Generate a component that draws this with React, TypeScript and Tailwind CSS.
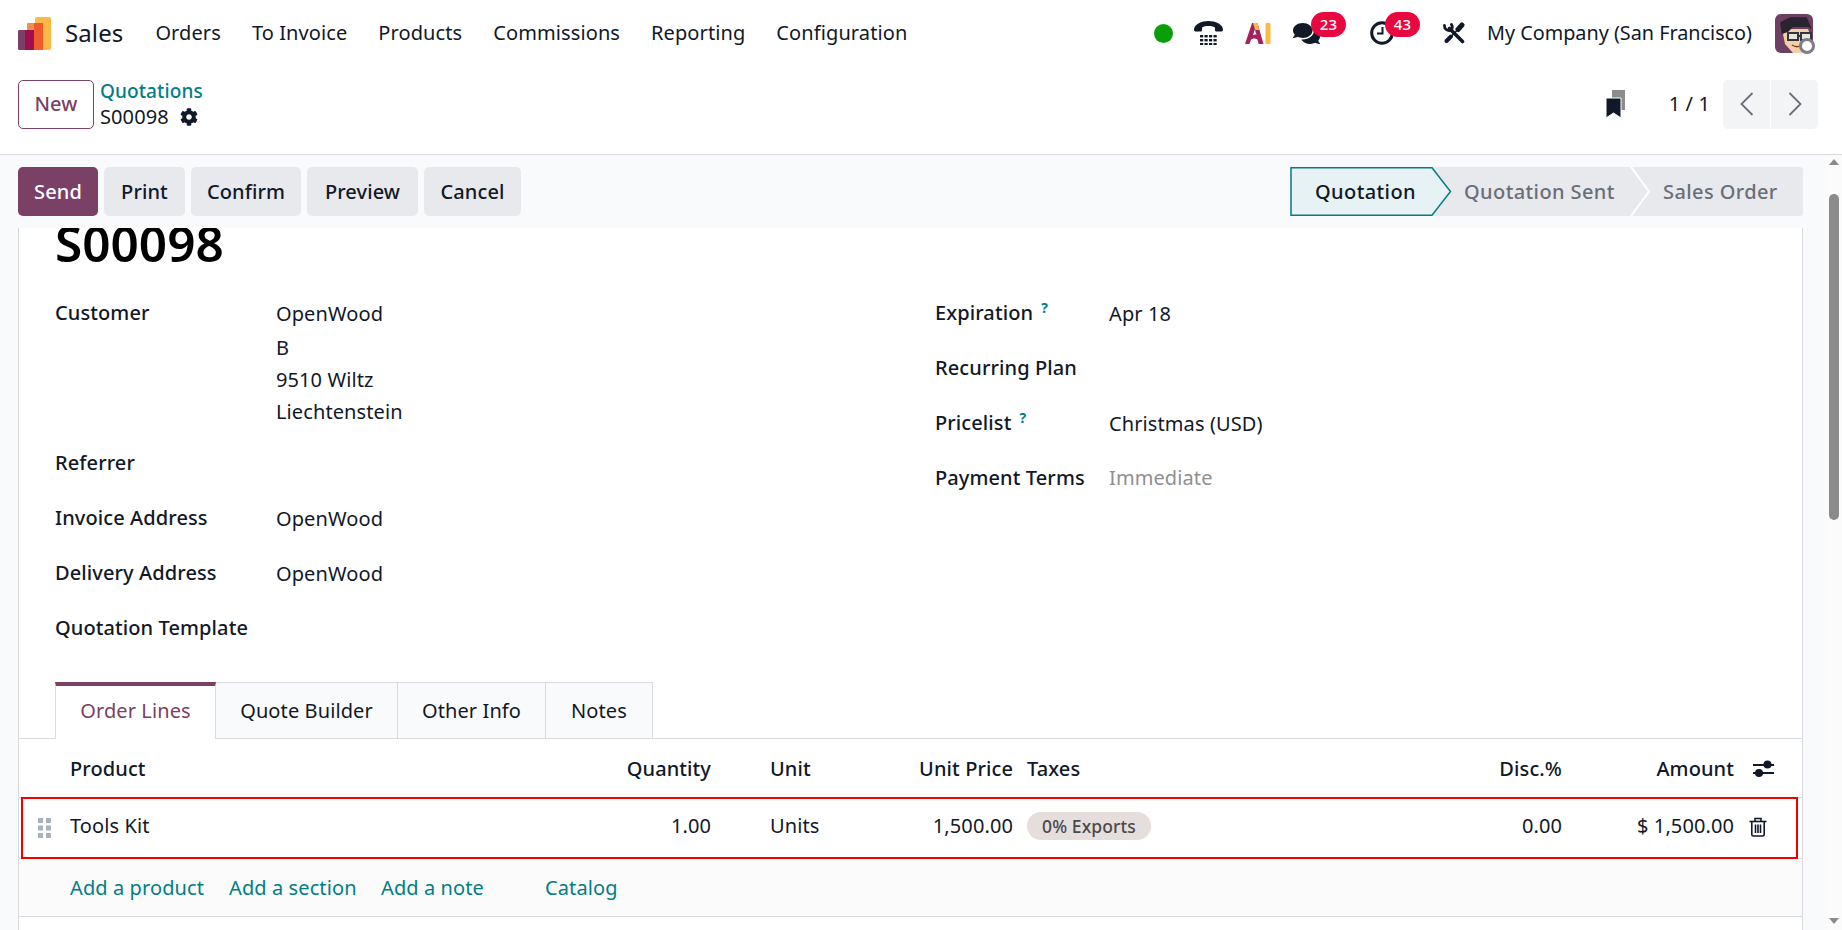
import { FaCog, FaComments } from "react-icons/fa";

const TABLE_COLS = "grid grid-cols-[51px_541px_100px_302px_449px_100px_172px_1fr] items-center";

const navItems = ["Orders", "To Invoice", "Products", "Commissions", "Reporting", "Configuration"];
const actions = [
    { label: "Print", width: "w-[81px]" },
    { label: "Confirm", width: "w-[110px]" },
    { label: "Preview", width: "w-[111px]" },
    { label: "Cancel", width: "w-[97px]" },
];
const tabs = [
    { label: "Quote Builder", width: "w-[182px]" },
    { label: "Other Info", width: "w-[148px]" },
    { label: "Notes", width: "w-[107px]" },
];

function AppLogo() {
    return (
        <svg width="34" height="34" viewBox="0 0 34 34" className="shrink-0">
            <path d="M18 3a2 2 0 0 1 2-2h12a2 2 0 0 1 2 2v29a2 2 0 0 1-2 2H18z" fill="#fbb945" />
            <path d="M10 9a2 2 0 0 1 2-2h14v27H10z" fill="#f05a2c" />
            <path d="M10 9a2 2 0 0 1 2-2h5v7h-7z" fill="#ee8f4d" />
            <path d="M1 16a2 2 0 0 1 2-2h14v20H3a2 2 0 0 1-2-2z" fill="#a20d4f" />
            <path d="M1 16a2 2 0 0 1 2-2h5v20H3a2 2 0 0 1-2-2z" fill="#7b4065" />
        </svg>
    );
}

function PhoneIcon() {
    const cols = [6, 10.5, 15, 19.5];
    const rows = [14, 18, 22];
    return (
        <svg width="29" height="24" viewBox="0 0 29 24" className="shrink-0" fill="#111827">
            <path d="M0 8.500C0.500 3 7.500 0 14.500 0s14 3 14.500 8.500c0.100 1.200-0.500 2-1.600 2h-4.700c-1 0-1.600-0.600-1.700-1.600l-0.200-2.700C19.200 5.300 17 5 14.500 5s-4.700 0.300-6.300 1.200L8 8.900c-0.100 1-0.700 1.600-1.700 1.600H1.600C0.500 10.500-0.100 9.700 0 8.500z" />
            {rows.map((y) => cols.map((x) => <rect key={`${x}-${y}`} x={x} y={y} width="3.200" height="2.400" />))}
        </svg>
    );
}

function AiIcon() {
    return (
        <svg width="26" height="21" viewBox="0 0 26 21" className="shrink-0">
            <path d="M7 0h5.500L18.500 21h-4.800l-1.300-4.500c-2.500-1.500-5-1-6.500 0.500L4.300 21H0z" fill="#a3215f" />
            <path d="M8 12c1.500-0.700 2.600-0.700 3.500-0.300L9.800 6.500z" fill="#ffffff" />
            <path d="M8 0h4.500l2 7h-4.300z" fill="#fbb945" />
            <rect x="20.500" y="0" width="5" height="21" rx="1" fill="#fbb945" />
        </svg>
    );
}

function ClockIcon() {
    return (
        <svg width="24" height="24" viewBox="0 0 24 24" className="shrink-0" fill="none" stroke="#111827">
            <circle cx="12" cy="12" r="10.300" strokeWidth="3" />
            <path d="M12.500 6v6.500H7" strokeWidth="2" />
        </svg>
    );
}

function ToolsIcon() {
    return (
        <svg width="23" height="22" viewBox="0 0 23 22" className="shrink-0" fill="none" stroke="#111827" strokeLinecap="round">
            <path d="M6.500 6.500 19.500 19.500" strokeWidth="3.600" />
            <path d="M1.500 3.500a4.800 4.800 0 0 0 6 5 4.800 4.800 0 0 0 1-6" strokeWidth="2.800" />
            <path d="M19 3 15 7.500" strokeWidth="5" />
            <path d="M14 8.500 9 13.500" strokeWidth="1.500" />
            <path d="M8 14.500 3.500 19" strokeWidth="4" />
        </svg>
    );
}

function Avatar() {
    return (
        <div className="relative h-[39px] w-[38px] shrink-0">
            <svg width="38" height="39" viewBox="0 0 38 39" className="rounded-[6px]">
                <rect width="38" height="39" fill="#6f3f63" />
                <path d="M8 20 13 15H33L37 25 32 39H18L10 30z" fill="#f3cfa6" />
                <path d="M6.700 20 5 8.300 15 3.300H31.700L36.700 15 33 13H18L13 18z" fill="#2a2330" />
                <rect x="13" y="19" width="10" height="7" fill="#e9e6df" stroke="#34343c" strokeWidth="2" />
                <rect x="26" y="19" width="10" height="7" fill="#e9e6df" stroke="#34343c" strokeWidth="2" />
                <path d="M23 22h3" stroke="#34343c" strokeWidth="2" />
                <path d="M17 31c3 2 7 2 10 0" stroke="#7a3b2a" strokeWidth="1.500" fill="none" />
            </svg>
            <span className="absolute bottom-[-1px] right-[-2px] h-[16px] w-[16px] rounded-full border-[3px] border-[#7c7f89] bg-white" />
        </div>
    );
}

function Badge({ count, place }: { count: number; place: string }) {
    return (
        <span
            className={`absolute flex h-[25px] w-[35px] items-center justify-center rounded-full bg-[#e8083f] text-[15px] font-medium text-white ${place}`}
        >
            {count}
        </span>
    );
}

function BookmarkIcon() {
    return (
        <svg width="20" height="28" viewBox="0 0 20 28">
            <path d="M6 0h13v20H6z" fill="#8c8c8c" />
            <path d="M0 8h15V28l-7.500-5L0 28z" fill="#111827" stroke="#ffffff" strokeWidth="1" />
        </svg>
    );
}

function Chevron({ left }: { left?: boolean }) {
    return (
        <svg width="14" height="24" viewBox="0 0 14 24" fill="none" stroke="#6b6e76" strokeWidth="1.800">
            <path d={left ? "M12.500 1 1.500 12l11 11" : "M1.500 1l11 11-11 11"} />
        </svg>
    );
}

function SlidersIcon() {
    return (
        <svg width="21" height="18" viewBox="0 0 21 18" fill="#111827">
            <rect x="0" y="4" width="21" height="2" />
            <rect x="0" y="12" width="21" height="2" />
            <circle cx="14.500" cy="4.500" r="4" />
            <circle cx="6" cy="13" r="4" />
        </svg>
    );
}

function TrashIcon() {
    return (
        <svg width="18" height="20" viewBox="0 0 18 20" fill="none" stroke="#111827" strokeWidth="1.600">
            <path d="M0.500 4.500h17" />
            <path d="M6 4.500V1.500h6v3" />
            <path d="M2.800 4.500v13a1.500 1.500 0 0 0 1.500 1.500h9.400a1.500 1.500 0 0 0 1.500-1.500v-13" />
            <path d="M6.500 7.500v8.500M9 7.500v8.500M11.500 7.500v8.500" />
        </svg>
    );
}

function DragHandle() {
    return (
        <svg width="13" height="20" viewBox="0 0 13 20" fill="#a9b3c0">
            <rect x="0" y="0" width="5" height="5" />
            <rect x="8" y="0" width="5" height="5" />
            <rect x="0" y="7.500" width="5" height="5" />
            <rect x="8" y="7.500" width="5" height="5" />
            <rect x="0" y="15" width="5" height="5" />
            <rect x="8" y="15" width="5" height="5" />
        </svg>
    );
}

function Field({ label, help, value, muted }: { label: string; help?: boolean; value?: string; muted?: boolean }) {
    return (
        <div className="grid h-[55px] grid-cols-[174px_1fr] items-center">
            <div className="font-[550]">
                {label}
                {help && <sup className="ml-[8px] text-[14px] font-bold text-[#017e84]">?</sup>}
            </div>
            <div className={muted ? "pt-[1px] text-[#8f8f8f]" : "pt-[2px]"}>{value}</div>
        </div>
    );
}

function LeftField({ label, value }: { label: string; value?: string }) {
    return (
        <div className="grid h-[55px] grid-cols-[221px_1fr] items-center">
            <div className="font-[550]">{label}</div>
            <div className="pt-[3px]">{value}</div>
        </div>
    );
}

export default function App() {
    return (
        <div className="flex h-[930px] w-[1842px] flex-col overflow-hidden bg-white font-['Noto_Sans',sans-serif] text-[20px] tracking-[0.1px] text-[#111827]">
            {/* top navbar */}
            <header className="flex h-[66px] shrink-0 items-center pl-[17px] pr-[29px]">
                <AppLogo />
                <span className="ml-[14px] mr-[32px] text-[24px]">Sales</span>
                <nav className="flex gap-[31px]">
                    {navItems.map((item) => (
                        <span key={item}>{item}</span>
                    ))}
                </nav>
                <div className="ml-auto flex items-center">
                    <span className="h-[19px] w-[19px] rounded-full bg-[#0a9e0a]" />
                    <span className="ml-[21px]">
                        <PhoneIcon />
                    </span>
                    <span className="ml-[22px]">
                        <AiIcon />
                    </span>
                    <span className="relative ml-[22px] text-[27px]">
                        <FaComments />
                        <Badge count={23} place="left-[18px] top-[-8px]" />
                    </span>
                    <span className="relative ml-[50px]">
                        <ClockIcon />
                        <Badge count={43} place="left-[15px] top-[-9px]" />
                    </span>
                    <span className="ml-[49px]">
                        <ToolsIcon />
                    </span>
                    <span className="ml-[21px] mr-[23px] whitespace-nowrap text-[19.8px] tracking-normal">My Company (San Francisco)</span>
                    <Avatar />
                </div>
            </header>

            {/* breadcrumb and pager */}
            <div className="flex h-[89px] shrink-0 items-center border-b border-[#d8dadd] pb-[12px] pl-[18px] pr-[24px]">
                <button className="flex h-[49px] w-[76px] items-center justify-center rounded-[5px] border border-[#7b4065] font-medium text-[#7b4065]">
                    New
                </button>
                <div className="ml-[6px] leading-[26px]">
                    <div className="text-[19px] font-medium text-[#017e84]">Quotations</div>
                    <div className="flex items-center gap-[11px]">
                        S00098
                        <FaCog className="text-[18px]" />
                    </div>
                </div>
                <div className="ml-auto flex items-center">
                    <BookmarkIcon />
                    <span className="ml-[43px] mr-[13px]">1 / 1</span>
                    <div className="flex h-[49px] w-[95px] rounded-[5px] bg-[#f3f4f6]">
                        <span className="flex flex-1 items-center justify-center border-r border-white">
                            <Chevron left />
                        </span>
                        <span className="flex flex-1 items-center justify-center">
                            <Chevron />
                        </span>
                    </div>
                </div>
            </div>

            <div className="flex min-h-0 flex-1">
                <main className="flex min-w-0 flex-1 flex-col bg-[#f9fafb]">
                    {/* action buttons and status bar */}
                    <div className="flex h-[73px] shrink-0 items-center justify-between pb-[1px] pl-[18px] pr-[23px] font-[550]">
                        <div className="flex gap-[6px]">
                            <button className="h-[49px] w-[80px] rounded-[5px] bg-[#7b4065] pt-[1px] text-white">Send</button>
                            {actions.map((a) => (
                                <button key={a.label} className={`h-[49px] rounded-[5px] bg-[#e7e9ed] pt-[1px] ${a.width}`}>
                                    {a.label}
                                </button>
                            ))}
                        </div>
                        <div className="flex h-[49px] items-center rounded-[3px] bg-[#e7e9ed] tracking-[0.4px] text-[#6b6e78]">
                            <div className="relative flex h-full w-[162px] items-center pl-[25px] text-[#111827]">
                                <svg width="162" height="49" viewBox="0 0 162 49" className="absolute left-0 top-0">
                                    <path d="M1 0.750H142L160.500 24.500 142 48.250H1z" fill="#e6f2f3" stroke="#017e84" strokeWidth="1.500" />
                                </svg>
                                <span className="relative pt-[1px]">Quotation</span>
                            </div>
                            <span className="ml-[12px] w-[150px] whitespace-nowrap pt-[1px]">Quotation Sent</span>
                            <svg width="20" height="49" viewBox="0 0 20 49" className="ml-[16px]" fill="none" stroke="#ffffff" strokeWidth="2">
                                <path d="M1 0l18 24.500L1 49" />
                            </svg>
                            <span className="ml-[13px] mr-[26px] w-[114px] whitespace-nowrap pt-[1px]">Sales Order</span>
                        </div>
                    </div>

                    {/* form sheet */}
                    <section className="ml-[18px] mr-[23px] min-h-0 flex-1 overflow-hidden border-x border-[#d8dadd] bg-white">
                        <h1 className="-mt-[15px] mb-[12px] ml-[36px] text-[49.500px] font-semibold leading-[60px] tracking-normal text-black">S00098</h1>

                        <div className="grid grid-cols-[880px_1fr] pl-[36px]">
                            <div>
                                <div className="grid h-[150px] grid-cols-[221px_1fr] pt-[12px]">
                                    <div className="font-[550] leading-[32px]">Customer</div>
                                    <div className="leading-[32px]">
                                        <div className="mb-[2px] pt-[1px]">OpenWood</div>
                                        <div>B</div>
                                        <div>9510 Wiltz</div>
                                        <div>Liechtenstein</div>
                                    </div>
                                </div>
                                <LeftField label="Referrer" />
                                <LeftField label="Invoice Address" value="OpenWood" />
                                <LeftField label="Delivery Address" value="OpenWood" />
                                <LeftField label="Quotation Template" />
                            </div>
                            <div>
                                <Field label="Expiration" help value="Apr 18" />
                                <Field label="Recurring Plan" />
                                <Field label="Pricelist" help value="Christmas (USD)" />
                                <Field label="Payment Terms" value="Immediate" muted />
                            </div>
                        </div>

                        {/* tabs */}
                        <div className="mt-[27px] flex h-[57px] border-b border-[#d8dadd] pl-[36px]">
                            <div className="-mb-px flex h-[57px] w-[161px] items-center justify-center border-x border-[#d8dadd] border-t-[4px] border-t-[#7b4065] bg-white pb-[3px] text-[#7b4065]">
                                Order Lines
                            </div>
                            {tabs.map((t) => (
                                <div key={t.label} className={`flex items-center justify-center border-r border-t border-[#d8dadd] bg-[#f9fafb] ${t.width}`}>
                                    {t.label}
                                </div>
                            ))}
                        </div>

                        {/* order lines */}
                        <div className={`${TABLE_COLS} h-[59px] border-b border-[#d8dadd] pt-[2px] font-[550]`}>
                            <span />
                            <span>Product</span>
                            <span className="text-right">Quantity</span>
                            <span className="flex justify-between pl-[59px]">
                                <span>Unit</span>
                                <span>Unit Price</span>
                            </span>
                            <span className="pl-[14px]">Taxes</span>
                            <span className="text-right">Disc.%</span>
                            <span className="text-right">Amount</span>
                            <span className="pl-[19px]">
                                <SlidersIcon />
                            </span>
                        </div>
                        <div className={`${TABLE_COLS} relative h-[61px] border-b border-[#d8dadd] pb-[4px]`}>
                            <span className="pl-[19px] pt-[4px]">
                                <DragHandle />
                            </span>
                            <span>Tools Kit</span>
                            <span className="text-right">1.00</span>
                            <span className="flex justify-between pl-[59px]">
                                <span>Units</span>
                                <span>1,500.00</span>
                            </span>
                            <span className="pl-[14px]">
                                <span className="inline-flex h-[28px] w-[124px] items-center justify-center rounded-full bg-[#e6dedd] text-[17.500px] font-medium text-[#4a4a4a]">
                                    0% Exports
                                </span>
                            </span>
                            <span className="text-right">0.00</span>
                            <span className="whitespace-nowrap text-right">$ 1,500.00</span>
                            <span className="pl-[15px] pt-[2px]">
                                <TrashIcon />
                            </span>
                            <div className="pointer-events-none absolute bottom-[-1px] left-[2px] right-[4px] top-[-1px] border-[2px] border-[#f50000]" />
                        </div>
                        <div className="flex h-[58px] items-center border-b border-[#d8dadd] bg-[#fbfbfb] pl-[51px] text-[#017e84]">
                            <span className="w-[159px]">Add a product</span>
                            <span className="w-[152px]">Add a section</span>
                            <span className="w-[164px]">Add a note</span>
                            <span>Catalog</span>
                        </div>
                    </section>
                </main>

                {/* page scrollbar */}
                <div className="relative w-[16px] shrink-0 bg-[#fbfbfb]">
                    <span className="absolute left-[3px] top-[4px] h-0 w-0 border-x-[5px] border-b-[6px] border-x-transparent border-b-[#8a8a8a]" />
                    <span className="absolute left-[3px] top-[39px] h-[326px] w-[10px] rounded-full bg-[#8a8a8a]" />
                    <span className="absolute bottom-[6px] left-[3px] h-0 w-0 border-x-[5px] border-t-[6px] border-x-transparent border-t-[#8a8a8a]" />
                </div>
            </div>
        </div>
    );
}
